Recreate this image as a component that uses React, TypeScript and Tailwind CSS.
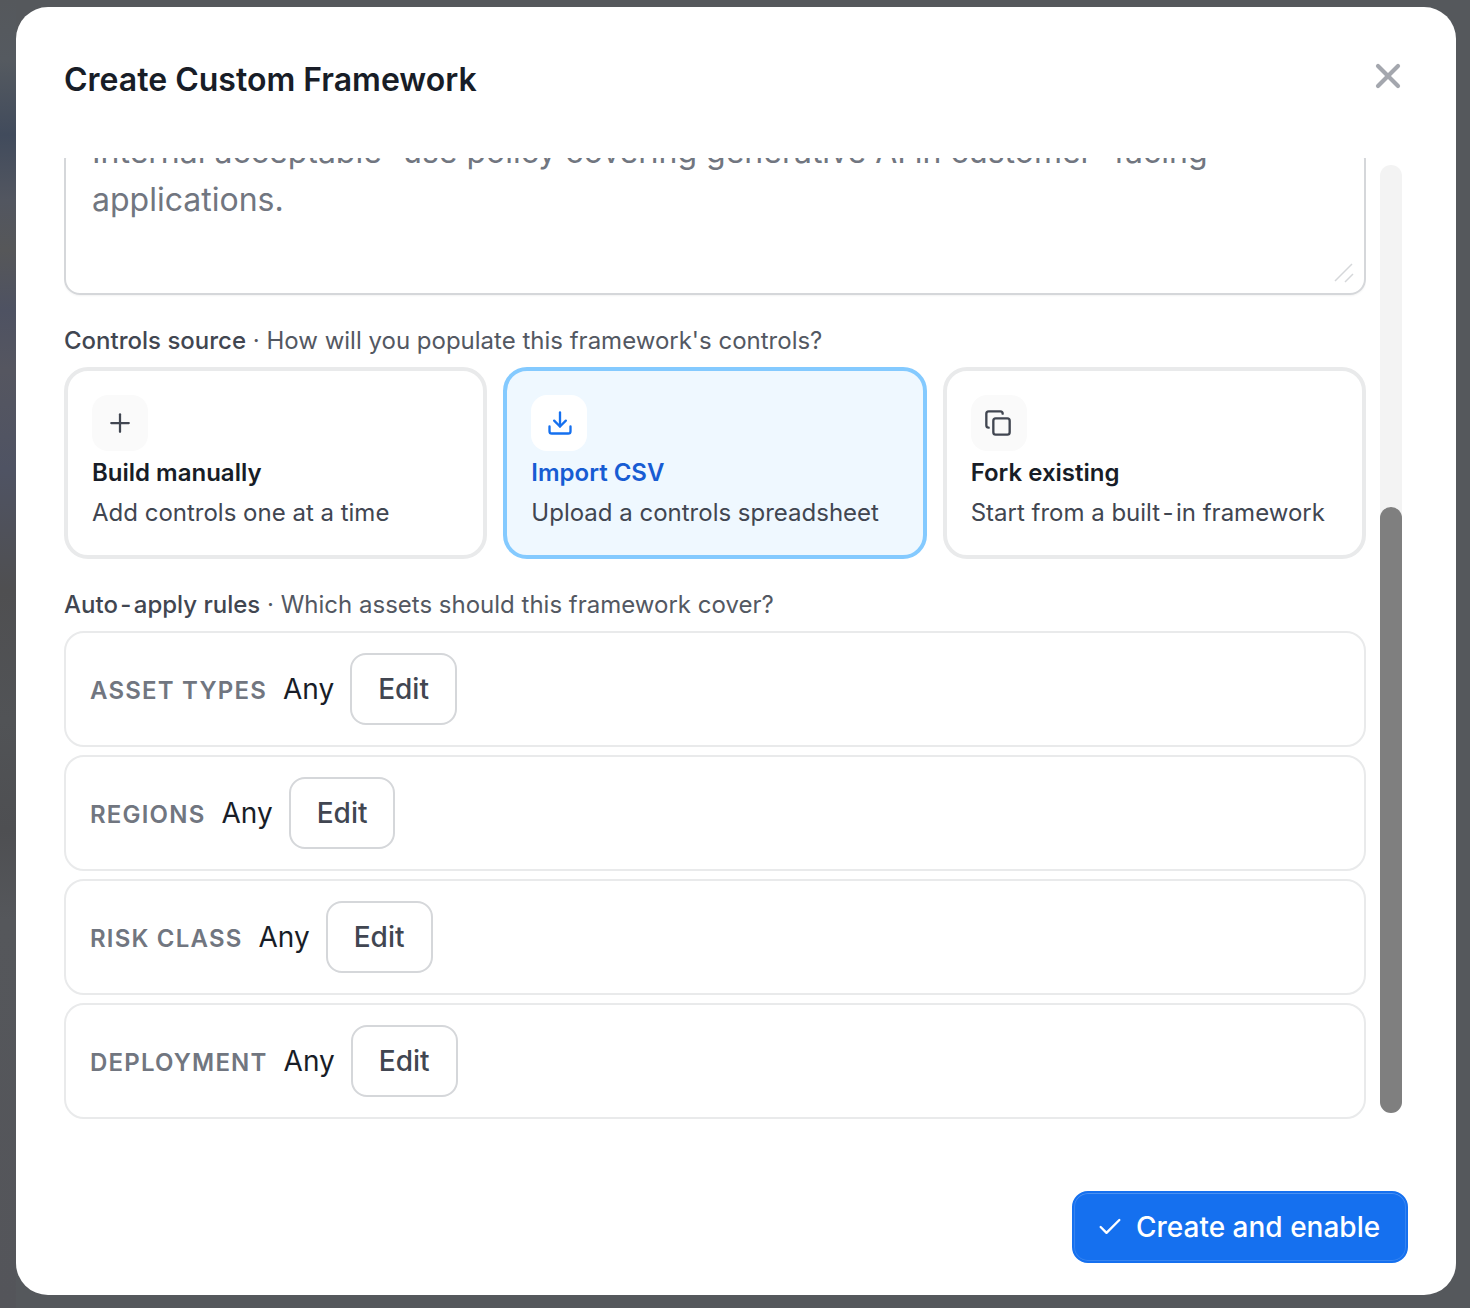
import { Check, Copy, Download, Plus, X } from "lucide-react";
import type { ReactNode } from "react";

// the reference's font sets hyphens wider than the installed Inter
const Hy = () => <span className="mx-[0.1em]">-</span>;

const sources = [
  { title: "Build manually", sub: <>Add controls one at a time</>, icon: <Plus className="size-[30px]" strokeWidth={1.8} /> },
  { title: "Import CSV", sub: <>Upload a controls spreadsheet</>, icon: <Download className="ml-px size-7" strokeWidth={2} />, active: true },
  { title: "Fork existing", sub: <>Start from a built<Hy />in framework</>, icon: <Copy className="mr-0.5 size-7" strokeWidth={2} /> },
];

const rules = ["Asset types", "Regions", "Risk class", "Deployment"];

function SourceCard({ title, sub, icon, active }: { title: string; sub: ReactNode; icon: ReactNode; active?: boolean }) {
  return (
    <div
      className={`flex h-[192px] flex-col rounded-[24px] border-4 p-6 ${
        active ? "border-[#84caff] bg-[#eff8ff]" : "border-[#e9eaeb] bg-white"
      }`}
    >
      <div
        className={`flex size-14 shrink-0 items-center justify-center rounded-2xl ${
          active ? "bg-white text-[#1570ef]" : "bg-[#fafafa] text-[#414651]"
        }`}
      >
        {icon}
      </div>
      <div className={`mt-1 text-[24px] leading-[36px] font-semibold ${active ? "text-[#175cd3]" : "text-[#181d27]"}`}>
        {title}
      </div>
      <div className="mt-1 text-[24px] leading-[36px] text-[#414651]">{sub}</div>
    </div>
  );
}

function SectionLabel({ name, hint }: { name: ReactNode; hint: string }) {
  return (
    <div className="text-[24px] leading-[36px] text-[#535862]">
      <span className="font-medium text-[#414651]">{name}</span> · {hint}
    </div>
  );
}

function RuleRow({ label }: { label: string }) {
  return (
    <div className="flex h-[116px] items-center rounded-[20px] border-2 border-[#e9eaeb] px-6">
      <div className="flex items-baseline gap-4">
        <span className="text-[24px] font-semibold tracking-[0.05em] text-[#717680] uppercase">{label}</span>
        <span className="text-[28px] text-[#181d27]">Any</span>
        <button className="flex h-[72px] items-center rounded-2xl border-2 border-[#d5d7da] bg-white px-[26px] text-[28px] font-medium text-[#414651]">
          Edit
        </button>
      </div>
    </div>
  );
}

export default function App() {
  return (
    <div className="h-[1308px] overflow-hidden bg-[linear-gradient(to_right,transparent_16px,#55585c_16px),linear-gradient(to_bottom,#55585c_0,#555a60_60px,#414b5c_135px,#525660_200px,#565759_250px,#4e5262_310px,#555660_370px,#4f5363_470px,#4f4f51_590px,#515356_720px,#4e4f52_830px,#55575b_920px,#54555a_1308px)] pt-[7px] pl-4 font-['Inter',sans-serif]">
      <div className="flex h-[1288px] w-[1440px] flex-col rounded-[32px] bg-white">
        <header className="flex h-[151px] shrink-0 items-start justify-between pt-[49px] pr-12 pl-12">
          <h1 className="mt-[3px] text-[32px] leading-[42px] font-semibold text-[#181d27]">Create Custom Framework</h1>
          <button className="text-[#a4a7ae]">
            <X className="size-10" strokeWidth={2.5} />
          </button>
        </header>

        <div className="flex h-[962px] shrink-0 gap-3.5 overflow-hidden pr-[54px] pl-12">
          <div className="min-w-0 flex-1 overflow-hidden">
            <div className="relative -mt-[14px] h-[151px] rounded-2xl border-2 border-[#d5d7da] px-[26px] text-[32px] leading-[48px] text-[#717680] shadow-xs">
              <div className="-mt-[18px]">
                Internal acceptable<Hy />use policy covering generative AI in customer<Hy />facing applications.
              </div>
              <svg className="absolute right-2.5 bottom-2.5 size-5 text-[#d5d7da]" viewBox="0 0 20 20" fill="none" stroke="currentColor" strokeWidth="1.5">
                <path d="M1 18 18 1M11 19l8-8" />
              </svg>
            </div>

            <div className="mt-7">
              <SectionLabel name="Controls source" hint="How will you populate this framework's controls?" />
            </div>
            <div className="mt-2 grid grid-cols-3 gap-4">
              {sources.map((s) => (
                <SourceCard key={s.title} {...s} />
              ))}
            </div>

            <div className="mt-7">
              <SectionLabel name={<>Auto<Hy />apply rules</>} hint="Which assets should this framework cover?" />
            </div>
            <div className="mt-2 flex flex-col gap-2">
              {rules.map((r) => (
                <RuleRow key={r} label={r} />
              ))}
            </div>
          </div>

          <div className="mt-[7px] flex h-[948px] w-[22px] shrink-0 flex-col justify-end rounded-full bg-[#f3f3f3]">
            <div className="h-[606px] rounded-full bg-[#7f7f7f]" />
          </div>
        </div>

        <footer className="flex flex-1 items-start justify-end pt-[71px] pr-12">
          <button className="flex h-[72px] w-[336px] items-center gap-3 rounded-2xl border-2 border-[#1570ef] bg-[#1570ef] pl-[22px] text-[28px] font-medium text-white shadow-[inset_0_0_0_1px_#ffffff24,inset_0_1px_0_#ffffff1a]">
            <Check className="size-7" strokeWidth={2} />
            Create and enable
          </button>
        </footer>
      </div>
    </div>
  );
}
